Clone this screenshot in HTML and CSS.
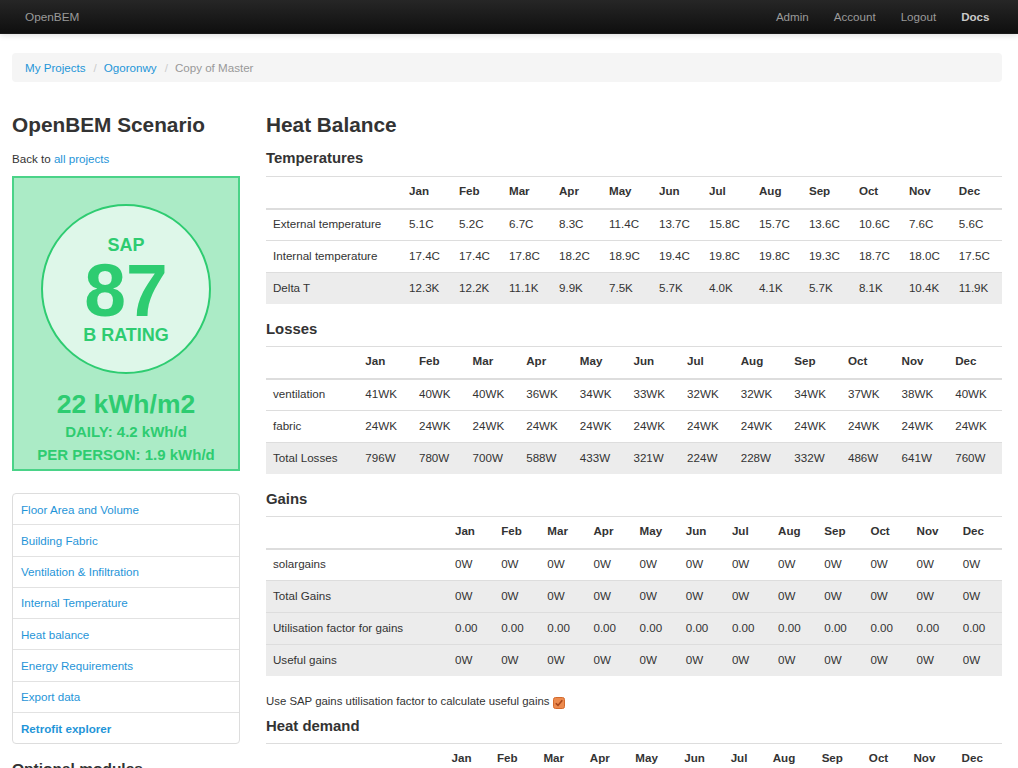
FILE: index.html
```html
<!DOCTYPE html>
<html>
<head>
<meta charset="utf-8">
<title>OpenBEM</title>
<link rel="stylesheet" href="styles.css">
</head>
<body>
<div class="navbar">
  <div class="nav-inner">
    <span class="brand">OpenBEM</span>
    <ul class="nav-links">
      <li><a href="#">Admin</a></li>
      <li><a href="#">Account</a></li>
      <li><a href="#">Logout</a></li>
      <li><a href="#" class="docs">Docs</a></li>
    </ul>
  </div>
</div>

<div class="container">
  <ul class="breadcrumb">
    <li><a href="#">My Projects</a><span class="divider">/</span></li>
    <li><a href="#">Ogoronwy</a><span class="divider">/</span></li>
    <li class="active">Copy of Master</li>
  </ul>

  <div class="row">
    <div class="sidebar">
      <h3 class="page-title">OpenBEM Scenario</h3>
      <p class="back">Back to <a href="#">all projects</a></p>

      <div class="sap-box">
        <div class="sap-circle">
          <div class="sap-label">SAP</div>
          <div class="sap-value">87</div>
          <div class="sap-label">B RATING</div>
        </div>
        <div class="sap-kwh">22 kWh/m2</div>
        <div class="sap-sub">DAILY: 4.2 kWh/d</div>
        <div class="sap-sub">PER PERSON: 1.9 kWh/d</div>
      </div>

      <ul class="nav-list">
        <li><a href="#">Floor Area and Volume</a></li>
        <li><a href="#">Building Fabric</a></li>
        <li><a href="#">Ventilation &amp; Infiltration</a></li>
        <li><a href="#">Internal Temperature</a></li>
        <li><a href="#">Heat balance</a></li>
        <li><a href="#">Energy Requirements</a></li>
        <li><a href="#">Export data</a></li>
        <li><a href="#" class="strong">Retrofit explorer</a></li>
      </ul>

      <h4 class="opt-title">Optional modules</h4>
    </div>

    <div class="main">
      <h3 class="page-title">Heat Balance</h3>

      <h4>Temperatures</h4>
      <table class="table">
        <tr class="head"><th></th><th>Jan</th><th>Feb</th><th>Mar</th><th>Apr</th><th>May</th><th>Jun</th><th>Jul</th><th>Aug</th><th>Sep</th><th>Oct</th><th>Nov</th><th>Dec</th></tr>
        <tr class="first"><td>External temperature</td><td>5.1C</td><td>5.2C</td><td>6.7C</td><td>8.3C</td><td>11.4C</td><td>13.7C</td><td>15.8C</td><td>15.7C</td><td>13.6C</td><td>10.6C</td><td>7.6C</td><td>5.6C</td></tr>
        <tr><td>Internal temperature</td><td>17.4C</td><td>17.4C</td><td>17.8C</td><td>18.2C</td><td>18.9C</td><td>19.4C</td><td>19.8C</td><td>19.8C</td><td>19.3C</td><td>18.7C</td><td>18.0C</td><td>17.5C</td></tr>
        <tr class="hl"><td>Delta T</td><td>12.3K</td><td>12.2K</td><td>11.1K</td><td>9.9K</td><td>7.5K</td><td>5.7K</td><td>4.0K</td><td>4.1K</td><td>5.7K</td><td>8.1K</td><td>10.4K</td><td>11.9K</td></tr>
      </table>

      <h4>Losses</h4>
      <table class="table">
        <tr class="head"><th></th><th>Jan</th><th>Feb</th><th>Mar</th><th>Apr</th><th>May</th><th>Jun</th><th>Jul</th><th>Aug</th><th>Sep</th><th>Oct</th><th>Nov</th><th>Dec</th></tr>
        <tr class="first"><td>ventilation</td><td>41WK</td><td>40WK</td><td>40WK</td><td>36WK</td><td>34WK</td><td>33WK</td><td>32WK</td><td>32WK</td><td>34WK</td><td>37WK</td><td>38WK</td><td>40WK</td></tr>
        <tr><td>fabric</td><td>24WK</td><td>24WK</td><td>24WK</td><td>24WK</td><td>24WK</td><td>24WK</td><td>24WK</td><td>24WK</td><td>24WK</td><td>24WK</td><td>24WK</td><td>24WK</td></tr>
        <tr class="hl"><td>Total Losses</td><td>796W</td><td>780W</td><td>700W</td><td>588W</td><td>433W</td><td>321W</td><td>224W</td><td>228W</td><td>332W</td><td>486W</td><td>641W</td><td>760W</td></tr>
      </table>

      <h4>Gains</h4>
      <table class="table">
        <tr class="head"><th></th><th>Jan</th><th>Feb</th><th>Mar</th><th>Apr</th><th>May</th><th>Jun</th><th>Jul</th><th>Aug</th><th>Sep</th><th>Oct</th><th>Nov</th><th>Dec</th></tr>
        <tr class="first"><td>solargains</td><td>0W</td><td>0W</td><td>0W</td><td>0W</td><td>0W</td><td>0W</td><td>0W</td><td>0W</td><td>0W</td><td>0W</td><td>0W</td><td>0W</td></tr>
        <tr class="hl"><td>Total Gains</td><td>0W</td><td>0W</td><td>0W</td><td>0W</td><td>0W</td><td>0W</td><td>0W</td><td>0W</td><td>0W</td><td>0W</td><td>0W</td><td>0W</td></tr>
        <tr class="hl"><td>Utilisation factor for gains</td><td>0.00</td><td>0.00</td><td>0.00</td><td>0.00</td><td>0.00</td><td>0.00</td><td>0.00</td><td>0.00</td><td>0.00</td><td>0.00</td><td>0.00</td><td>0.00</td></tr>
        <tr class="hl"><td>Useful gains</td><td>0W</td><td>0W</td><td>0W</td><td>0W</td><td>0W</td><td>0W</td><td>0W</td><td>0W</td><td>0W</td><td>0W</td><td>0W</td><td>0W</td></tr>
      </table>

      <p class="sap-check">Use SAP gains utilisation factor to calculate useful gains
        <svg class="checkbox" width="12" height="12" viewBox="0 0 12 12"><rect x="0.5" y="0.5" width="11" height="11" rx="2" fill="#ec8a4e" stroke="#d46a2c"/><path d="M2.8 6.2 L5 8.4 L9.3 3.2" fill="none" stroke="#a8461a" stroke-width="1.6"/></svg>
      </p>

      <h4 class="after-check">Heat demand</h4>
      <table class="table">
        <tr class="head"><th></th><th>Jan</th><th>Feb</th><th>Mar</th><th>Apr</th><th>May</th><th>Jun</th><th>Jul</th><th>Aug</th><th>Sep</th><th>Oct</th><th>Nov</th><th>Dec</th></tr>
        <tr class="first"><td>Space heating demand</td><td>0W</td><td>0W</td><td>0W</td><td>0W</td><td>0W</td><td>0W</td><td>0W</td><td>0W</td><td>0W</td><td>0W</td><td>0W</td><td>0W</td></tr>
      </table>
    </div>
  </div>
</div>
</body>
</html>
```
FILE: styles.css
```css
* { box-sizing: border-box; }

html, body {
  margin: 0;
  padding: 0;
  background: #fff;
  color: #333;
  font-family: "Liberation Sans", Arial, Helvetica, sans-serif;
  font-size: 11.6px;
  line-height: 17px;
  overflow: hidden;
}

a { color: #1f95d8; text-decoration: none; }

/* Navbar */
.navbar {
  height: 34px;
  background: linear-gradient(to bottom, #262626, #0f0f0f);
  border-bottom: 1px solid #1a1a1a;
  box-shadow: 0 1px 6px rgba(0,0,0,0.15);
}
.nav-inner {
  width: 990px;
  margin-left: 12px;
  height: 34px;
  display: flex;
  align-items: center;
  justify-content: space-between;
}
.brand {
  color: #9a9a9a;
  padding-left: 13px;
  font-size: 11.8px;
}
.nav-links {
  list-style: none;
  margin: 0;
  padding: 0;
  display: flex;
}
.nav-links a {
  display: block;
  color: #9a9a9a;
  padding: 0 12.5px;
  line-height: 34px;
}
.nav-links a.docs {
  color: #c9c9c9;
  font-weight: bold;
}

/* Container */
.container {
  width: 990px;
  margin-left: 12px;
}

.breadcrumb {
  list-style: none;
  margin: 19px 0 0;
  padding: 5.5px 13px 6.5px;
  background: #f5f5f5;
  border-radius: 4px;
  display: flex;
  line-height: 17px;
}
.breadcrumb .divider {
  color: #ccc;
  padding: 0 7px 0 8px;
}
.breadcrumb .active { color: #999; }

.row {
  display: grid;
  grid-template-columns: 228px 736px;
  column-gap: 26px;
  padding-top: 26px;
}

.page-title {
  margin: 0 0 8px;
  font-size: 20.8px;
  line-height: 34px;
  font-weight: bold;
  color: #333;
}

h4 {
  margin: 16px 0 8px;
  font-size: 14.9px;
  line-height: 17px;
  font-weight: bold;
  color: #333;
}
.page-title + h4 { margin-top: 0; margin-bottom: 9px; }
h4.after-check { margin-top: 0; }

.back { margin: 0 0 9px; }

/* SAP box */
.sap-box {
  border: 2px solid #4ad388;
  background: #abebc6;
  padding: 26px 0 4px;
  display: flex;
  flex-direction: column;
  align-items: center;
  color: #2ecc71;
  font-weight: bold;
  text-align: center;
}
.sap-circle {
  width: 170px;
  height: 170px;
  border: 2px solid #2ecc71;
  border-radius: 50%;
  background: #def7e9;
  display: flex;
  flex-direction: column;
  justify-content: center;
  align-items: center;
  padding-top: 1px;
}
.sap-label {
  font-size: 18px;
  line-height: 20px;
}
.sap-value {
  font-size: 75px;
  line-height: 70px;
}
.sap-kwh {
  font-size: 26.5px;
  line-height: 30px;
  margin-top: 15px;
}
.sap-sub {
  font-size: 15px;
  line-height: 20px;
  margin-top: 3px;
}

/* Side nav */
.nav-list {
  list-style: none;
  margin: 22px 0 0;
  padding: 0;
  border: 1px solid #ddd;
  border-radius: 4px;
}
.nav-list li + li { border-top: 1px solid #e2e2e2; }
.nav-list a {
  display: block;
  padding: 6.5px 8px 6.8px;
}
.nav-list a.strong { font-weight: bold; }

.opt-title { margin-top: 16px; font-size: 15.5px; }

/* Tables */
.table {
  width: 100%;
  border-collapse: separate;
  border-spacing: 0;
  margin-bottom: 17px;
}
.table th, .table td {
  text-align: left;
  padding: 6px 7px 8px;
  line-height: 17px;
  border-top: 1px solid #ddd;
  white-space: nowrap;
}
.table th {
  font-weight: bold;
  padding-top: 5px;
  padding-bottom: 9px;
}
.table tr.first td {
  border-top: 2px solid #ddd;
  padding-top: 5px;
}
.table tr.hl td { background: #ececec; }

.sap-check {
  margin: 0 0 8px;
  display: flex;
  align-items: center;
  gap: 4px;
  font-size: 11.4px;
}
.checkbox { display: block; margin-top: 2px; }
```
